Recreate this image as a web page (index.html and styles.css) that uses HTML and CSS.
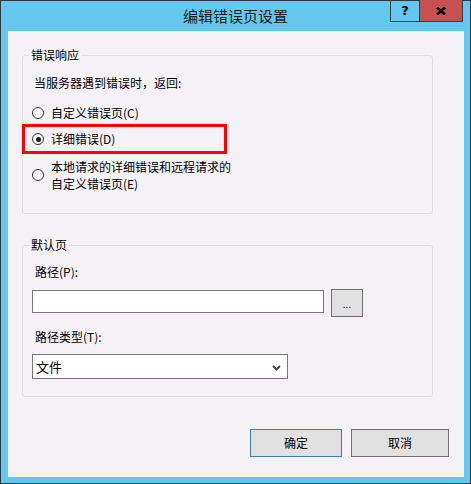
FILE: index.html
```html
<!DOCTYPE html>
<html lang="zh-CN">
<head>
<meta charset="utf-8">
<title>编辑错误页设置</title>
<link rel="stylesheet" href="styles.css">
</head>
<body>
<div class="window">
  <div class="titlebar">
    <div class="title">编辑错误页设置</div>
    <div class="caption-buttons">
      <div class="cap-btn help">?</div>
      <div class="cap-btn close">
        <svg width="10" height="8" viewBox="0 0 10 8"><path d="M1 0.5 L9 7.5 M9 0.5 L1 7.5" stroke="#000" stroke-width="2.6" fill="none"/></svg>
      </div>
    </div>
  </div>
  <div class="client">
    <div class="group group-error">
      <div class="group-title">错误响应</div>
      <div class="prompt">当服务器遇到错误时，返回:</div>
      <div class="radio-row r1"><span class="radio"></span><span class="radio-text">自定义错误页(C)</span></div>
      <div class="radio-row r2"><span class="radio checked"></span><span class="radio-text">详细错误(D)</span></div>
      <div class="radio-row r3"><span class="radio"></span><span class="radio-text two">本地请求的详细错误和远程请求的<br>自定义错误页(E)</span></div>
      <div class="highlight"></div>
    </div>
    <div class="group group-default">
      <div class="group-title">默认页</div>
      <div class="label l1">路径(P):</div>
      <div class="path-row">
        <div class="textbox"></div>
        <div class="browse">...</div>
      </div>
      <div class="label l2">路径类型(T):</div>
      <div class="select">
        <span class="select-text">文件</span>
        <svg class="chevron" width="9" height="6" viewBox="0 0 9 6"><path d="M1 1 L4.5 4.5 L8 1" stroke="#444" stroke-width="1.8" fill="none"/></svg>
      </div>
    </div>
    <div class="actions">
      <div class="btn ok">确定</div>
      <div class="btn cancel">取消</div>
    </div>
  </div>
</div>
</body>
</html>
```

FILE: styles.css
```css
* { box-sizing: border-box; }
html, body { margin: 0; padding: 0; }
body {
  font-family: "Noto Sans CJK SC", "Noto Sans", "Liberation Sans", sans-serif;
  font-size: 12px;
  color: #000;
  background: #fff;
}
.window {
  width: 471px;
  height: 484px;
  border: 1px solid #2b3a44;
  background: #64c8ee;
  display: flex;
  flex-direction: column;
}
.titlebar {
  height: 30px;
  display: flex;
  position: relative;
}
.title {
  flex: 1;
  text-align: center;
  font-size: 15px;
  line-height: 30px;
  color: #1b1b1b;
}
.caption-buttons {
  position: absolute;
  top: -1px;
  right: 7px;
  display: flex;
}
.cap-btn {
  height: 22px;
  display: flex;
  align-items: center;
  justify-content: center;
}
.help {
  width: 29px;
  border-left: 1px solid #2f3f4a;
  border-bottom: 1px solid #2f3f4a;
  font-family: "DejaVu Sans", sans-serif;
  font-weight: bold;
  font-size: 13px;
  color: #000;
}
.close {
  width: 44px;
  background: #c75050;
  border-bottom: 1px solid #2f3f4a;
  border-right: 1px solid #2f3f4a;
  border-left: 1px solid #2f3f4a;
}
.client {
  margin: 0 6px 6px 7px;
  flex: 1;
  background: #f5f2f6;
  padding: 24px 0 0 14px;
  display: flex;
  flex-direction: column;
}
.group {
  width: 411px;
  border: 1px solid #dcdde0;
  border-radius: 3px;
  padding: 0 0 0 8px;
  position: relative;
  display: flex;
  flex-direction: column;
  align-items: flex-start;
}
.group-title {
  margin-top: -9px;
  margin-left: -2px;
  padding: 0 2px;
  line-height: 16px;
  background: #f5f2f6;
}
.group-error { padding-bottom: 21px; }
.prompt {
  margin-top: 12px;
  margin-left: 3px;
  line-height: 16px;
}
.radio-row {
  display: flex;
  align-items: center;
  line-height: 16px;
}
.r1 { margin-top: 14px; }
.r2 { margin-top: 10px; }
.r3 { margin-top: 11px; }
.radio {
  width: 12px;
  height: 12px;
  border: 1px solid #333;
  border-radius: 50%;
  background: #fff;
  margin-left: 1px;
  margin-right: 7px;
  flex: none;
  display: flex;
  align-items: center;
  justify-content: center;
}
.radio.checked::after {
  content: "";
  width: 5px;
  height: 5px;
  border-radius: 50%;
  background: #1a1a1a;
}
.radio-text.two { line-height: 17px; }
.highlight {
  position: absolute;
  left: -1px;
  top: 68px;
  width: 205px;
  height: 30px;
  border: 3px solid #ff0000;
}
.group-default {
  margin-top: 31px;
  padding-bottom: 17px;
}
.label {
  margin-left: 4px;
  line-height: 16px;
}
.l1 { margin-top: 11px; }
.l2 { margin-top: 12px; }
.path-row {
  margin-top: 9px;
  display: flex;
  align-items: flex-start;
}
.textbox {
  margin-top: 1px;
  margin-left: 1px;
  width: 292px;
  height: 23px;
  border: 1px solid #7a7a7a;
  background: #fff;
}
.browse {
  margin-left: 7px;
  width: 32px;
  height: 28px;
  border: 1px solid #707070;
  background: #e1e1e1;
  display: flex;
  align-items: center;
  justify-content: center;
  font-family: "Liberation Sans", sans-serif;
  font-size: 10px;
  padding-top: 3px;
}
.select {
  margin-top: 9px;
  margin-left: 1px;
  width: 256px;
  height: 25px;
  border: 1px solid #7a7a7a;
  background: #fff;
  display: flex;
  align-items: center;
  justify-content: space-between;
  padding: 0 6px 0 3px;
}
.select-text { font-size: 13px; line-height: 16px; }
.chevron { margin-top: 2px; }
.actions {
  margin-top: 32px;
  display: flex;
  padding-left: 228px;
  gap: 9px;
}
.btn {
  height: 28px;
  border: 1px solid #707070;
  background: #e1e1e1;
  display: flex;
  align-items: center;
  justify-content: center;
  line-height: 16px;
}
.ok { width: 92px; border-color: #3c7fb1; }
.cancel { width: 98px; }
```
